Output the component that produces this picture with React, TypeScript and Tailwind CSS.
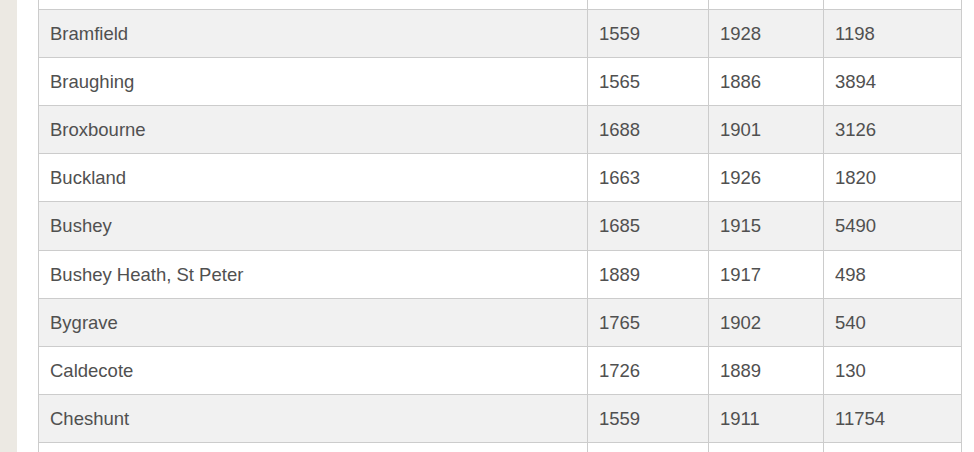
import React from 'react';

interface Parish {
  name: string;
  first: number;
  last: number;
  pop: number;
}

const parishes: Parish[] = [
  { name: 'Bramfield', first: 1559, last: 1928, pop: 1198 },
  { name: 'Braughing', first: 1565, last: 1886, pop: 3894 },
  { name: 'Broxbourne', first: 1688, last: 1901, pop: 3126 },
  { name: 'Buckland', first: 1663, last: 1926, pop: 1820 },
  { name: 'Bushey', first: 1685, last: 1915, pop: 5490 },
  { name: 'Bushey Heath, St Peter', first: 1889, last: 1917, pop: 498 },
  { name: 'Bygrave', first: 1765, last: 1902, pop: 540 },
  { name: 'Caldecote', first: 1726, last: 1889, pop: 130 },
  { name: 'Cheshunt', first: 1559, last: 1911, pop: 11754 },
];

const Row: React.FC<{ cells: (string | number)[]; shaded: boolean; height: string }> = ({ cells, shaded, height }) => (
  <div className={`flex shrink-0 border-b border-[#cccccc] ${height} ${shaded ? 'bg-[#f1f1f1]' : 'bg-white'}`}>
    <div className="w-[549px] border-l border-[#cccccc] pl-[11px] flex items-center">{cells[0]}</div>
    <div className="w-[121px] border-l border-[#cccccc] pl-[11px] flex items-center">{cells[1]}</div>
    <div className="w-[115px] border-l border-[#cccccc] pl-[11px] flex items-center">{cells[2]}</div>
    <div className="w-[139px] border-l border-r border-[#cccccc] pl-[11px] flex items-center">{cells[3]}</div>
  </div>
);

export default function App() {
  return (
    <div className="flex h-[452px] w-[974px] overflow-hidden bg-white font-['Liberation_Sans',Arial,sans-serif] text-[18.5px] text-[#505050]">
      <div className="w-[17px] shrink-0 bg-[#ece9e3]" />
      <div className="pl-[21px] flex flex-col">
        <Row cells={['', '', '', '']} shaded={false} height="h-[10px]" />
        {parishes.map((p, i) => (
          <Row
            key={p.name}
            cells={[p.name, p.first, p.last, p.pop]}
            shaded={i % 2 === 0}
            height={p.name === 'Bushey' ? 'h-[49px]' : 'h-[48px]'}
          />
        ))}
        <Row cells={['', '', '', '']} shaded={false} height="h-[48px]" />
      </div>
    </div>
  );
}
